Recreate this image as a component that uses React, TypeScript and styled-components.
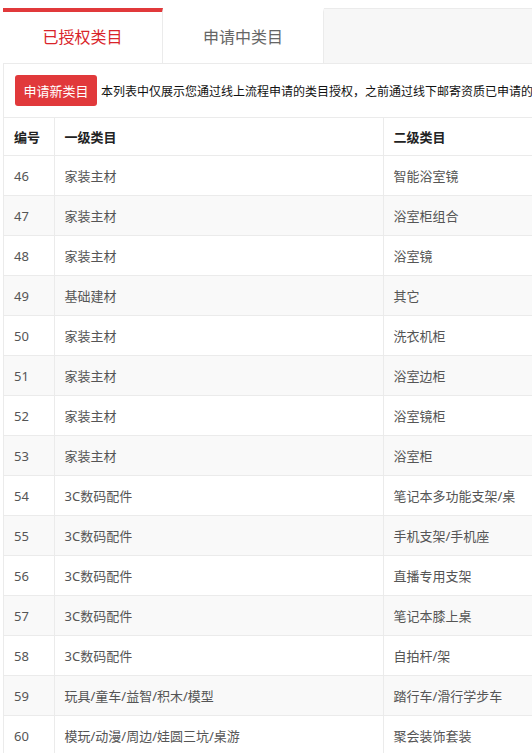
import styled, { createGlobalStyle } from 'styled-components';

type TabProps = {
  $active?: boolean;
};

type RowProps = {
  $striped?: boolean;
};

const rows: [number, string, string][] = [
  [46, '家装主材', '智能浴室镜'],
  [47, '家装主材', '浴室柜组合'],
  [48, '家装主材', '浴室镜'],
  [49, '基础建材', '其它'],
  [50, '家装主材', '洗衣机柜'],
  [51, '家装主材', '浴室边柜'],
  [52, '家装主材', '浴室镜柜'],
  [53, '家装主材', '浴室柜'],
  [54, '3C数码配件', '笔记本多功能支架/桌'],
  [55, '3C数码配件', '手机支架/手机座'],
  [56, '3C数码配件', '直播专用支架'],
  [57, '3C数码配件', '笔记本膝上桌'],
  [58, '3C数码配件', '自拍杆/架'],
  [59, '玩具/童车/益智/积木/模型', '踏行车/滑行学步车'],
  [60, '模玩/动漫/周边/娃圆三坑/桌游', '聚会装饰套装'],
];

export default function App() {
  return (
    <>
      <GlobalStyle />
      <Page>
        <TabBar>
          <Tab $active>已授权类目</Tab>
          <Tab>申请中类目</Tab>
        </TabBar>
        <Panel>
          <Toolbar>
            <ApplyButton>申请新类目</ApplyButton>
            <Notice>本列表中仅展示您通过线上流程申请的类目授权，之前通过线下邮寄资质已申请的</Notice>
          </Toolbar>
          <Table>
            <colgroup>
              <col style={{ width: 50 }} />
              <col style={{ width: 329 }} />
              <col />
            </colgroup>
            <thead>
              <tr>
                <HeadCell>编号</HeadCell>
                <HeadCell>一级类目</HeadCell>
                <HeadCell>二级类目</HeadCell>
              </tr>
            </thead>
            <tbody>
              {rows.map(([id, first, second], i) => (
                <Row key={id} $striped={i % 2 === 1}>
                  <Cell>{id}</Cell>
                  <Cell>{first}</Cell>
                  <Cell>{second}</Cell>
                </Row>
              ))}
            </tbody>
          </Table>
        </Panel>
      </Page>
    </>
  );
}

const GlobalStyle = createGlobalStyle`
  html, body {
    margin: 0;
    padding: 0;
    background: #ffffff;
    overflow: hidden;
  }
  body {
    font-family: "Noto Sans", "Noto Sans CJK SC", sans-serif;
  }
`;

const Page = styled.div`
  width: 532px;
  height: 753px;
  overflow: hidden;
  padding-top: 8px;
  box-sizing: border-box;
`;

const TabBar = styled.div`
  display: flex;
  margin-left: 3px;
  width: 900px;
  height: 54px;
  background: #f7f7f7;
  border-top: 1px solid #ebebeb;
  border-bottom: 1px solid #ebebeb;
`;

const Tab = styled.div<TabProps>`
  width: ${(p) => (p.$active ? '160px' : '161px')};
  display: flex;
  align-items: center;
  justify-content: center;
  box-sizing: border-box;
  background: #ffffff;
  border-right: 1px solid #ebebeb;
  border-top: 4px solid ${(p) => (p.$active ? '#e1393b' : '#ffffff')};
  margin-top: -1px;
  padding-bottom: 3px;
  font-size: 16px;
  color: ${(p) => (p.$active ? '#d9242a' : '#666666')};
`;

const Panel = styled.div`
  margin-left: 3px;
  border-left: 1px solid #ebebeb;
  width: 900px;
`;

const Toolbar = styled.div`
  display: flex;
  align-items: center;
  gap: 4px;
  padding: 11px 11px 11px;
  white-space: nowrap;
`;

const ApplyButton = styled.button`
  width: 82px;
  height: 31px;
  border: none;
  border-radius: 3px;
  background: #e1393b;
  color: #ffffff;
  font-family: inherit;
  font-size: 13px;
  padding: 0;
  flex-shrink: 0;
`;

const Notice = styled.span`
  font-size: 12px;
  color: #111111;
`;

const Table = styled.table`
  width: 900px;
  border-collapse: collapse;
  table-layout: fixed;
  border-top: 1px solid #ebebeb;
`;

const HeadCell = styled.th`
  height: 37px;
  padding: 0 10px;
  text-align: left;
  font-size: 13px;
  font-weight: 600;
  color: #222222;
  border-right: 1px solid #ebebeb;
  border-bottom: 1px solid #ebebeb;
`;

const Row = styled.tr<RowProps>`
  background: ${(p) => (p.$striped ? '#f9f9f9' : '#ffffff')};
`;

const Cell = styled.td`
  height: 39px;
  padding: 0 10px;
  font-size: 13px;
  color: #555555;
  white-space: nowrap;
  border-right: 1px solid #ebebeb;
  border-bottom: 1px solid #ebebeb;
`;
